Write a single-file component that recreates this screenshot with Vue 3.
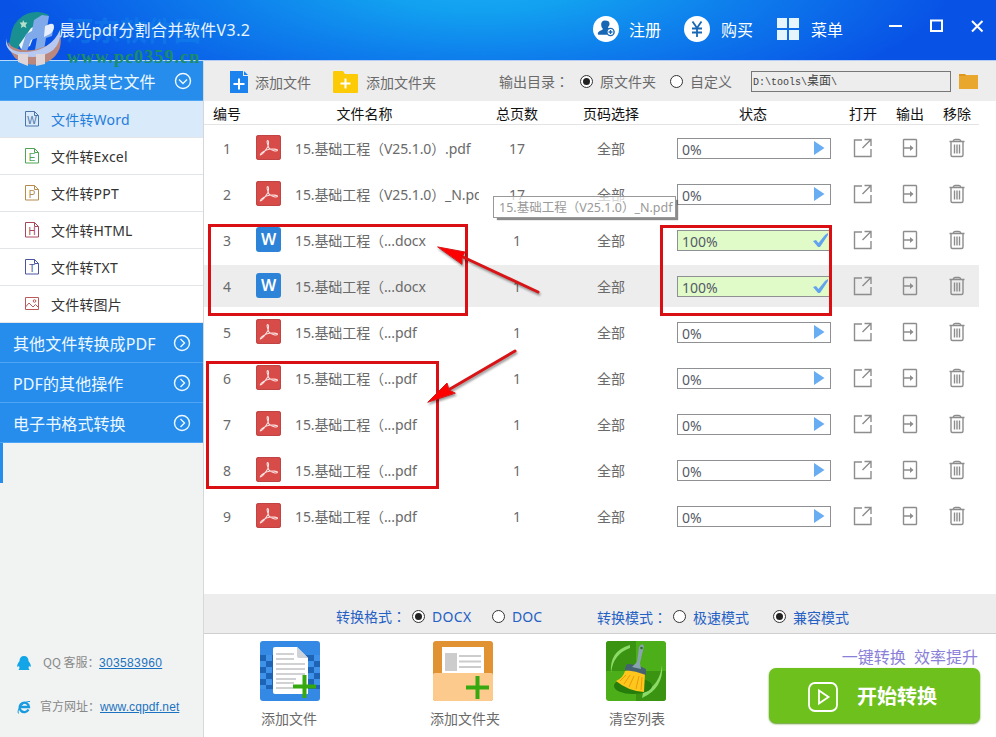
<template>
  <div class="window">
    <header class="titlebar">
      <svg class="logo" width="58" height="60" viewBox="0 0 58 60">
        <path d="M7 22A26 26 0 0 1 44 7L31 17 20 30 12 42 4 36z" fill="#1a8f91" />
        <path d="M18 12l1.500 2.500 3 0-2 2.500 1 3-3-1.500-2.500 1.500.5-3-2-2.500h3z" fill="#b5e0c9" />
        <path d="M14 37l12-17 7-3-8 21-9 3z" fill="#eef7f5" />
        <path d="M29 12l8-5 7 1-2 12 6 2-1 6-6 2-3 18h-9l3-18-6 2-5 14h-6l6-20 6-3z" fill="#7fa9e8" />
        <path d="M40 18l5-2q4-1 4 3t-4 7l-6 3z" fill="#e7efff" />
        <path d="M3 34Q9 44 28 42 48 38 55 26 59 45 42 54 24 61 10 50 4 43 3 34z" fill="#b9877e" />
        <path d="M2 27Q-1 45 22 44 46 42 55 22 57 46 29 49 4 49 1 36z" fill="#b7c9f1" />
        <path d="M13 46h10v12l-10-4zM31 46h9v10l-9 2z" fill="#dfd5d9" />
      </svg>
      <h1 class="app-name">晨光pdf分割合并软件V3.2</h1>
      <div class="mark-name">河东软件园</div>
      <div class="mark-url">www.pc0359.cn</div>
      <nav class="top-menu">
        <a class="top-item register">
          <svg width="28" height="28" viewBox="0 0 28 28">
            <circle cx="14" cy="14" r="13" fill="#fff" />
            <path d="M13 5.500c-2.700 0-4 1.700-3.800 4.300 0 2 .8 3 1.600 4 0 2-5 1.700-5 5.200q0 .8 1 .8h8l4-6c-3-.2-2.800-1.200-2.500-2 .8-1 1.200-1.500 1.200-3 0-2.300-1.500-3.300-4.500-3.300z" fill="#1767b5" />
            <circle cx="18.500" cy="17" r="3.600" fill="#fff" stroke="#1767b5" stroke-width="1.400" />
            <path d="M16.500 17h4M18.500 15v4" stroke="#1767b5" stroke-width="1.300" />
          </svg>
          <span>注册</span>
        </a>
        <a class="top-item buy">
          <svg width="28" height="28" viewBox="0 0 28 28">
            <circle cx="14" cy="14" r="13" fill="#fff" />
            <path d="M9.500 6.500l4.500 6.500 4.500-6.500M14 13v9M9 13.500h10M9 17.500h10" fill="none" stroke="#1767b5" stroke-width="1.800" />
          </svg>
          <span>购买</span>
        </a>
        <a class="top-item menu">
          <svg width="24" height="24" viewBox="0 0 24 24" fill="#e6f4fe">
            <path d="M1 1h10v10H1zM13 1h10v10H13zM1 13h10v10H1zM13 13h10v10H13z" />
          </svg>
          <span>菜单</span>
        </a>
      </nav>
      <div class="window-buttons">
        <svg width="14" height="14" viewBox="0 0 14 14"><path d="M0 7h13" /></svg>
        <svg width="14" height="14" viewBox="0 0 14 14"><path d="M1 1.500h11v10.500H1z" /></svg>
        <svg width="14" height="14" viewBox="0 0 14 14"><path d="M1 2l10.500 10.500M11.500 2L1 12.500" /></svg>
      </div>
    </header>

    <div class="body">
      <aside class="sidebar">
        <div class="group open">
          <span>PDF转换成其它文件</span>
          <svg width="18" height="18" viewBox="0 0 18 18">
            <circle cx="9" cy="9" r="7.500" />
            <path d="M5 7.500l4 4 4-4" />
          </svg>
        </div>
        <ul class="formats">
          <li v-for="item in formats" :key="item.name" :class="{ active: item.active }">
            <svg class="format-icon" width="16" height="18" viewBox="0 0 16 18" :stroke="item.color">
              <template v-if="item.letter">
                <path d="M.500 1.500h9l4 4v10.500h-13zM9.500 1.500v4h4" />
                <text x="7" y="13.500" :fill="item.color">{{ item.letter }}</text>
              </template>
              <template v-else>
                <path d="M.500 2.500h13v12h-13zM.500 12l3.500-4 4 4 2.500-2.500 3 3" />
                <circle cx="9.500" cy="6" r="1.300" />
              </template>
            </svg>
            <span>{{ item.name }}</span>
          </li>
        </ul>
        <div v-for="name in groups" :key="name" class="group">
          <span>{{ name }}</span>
          <svg width="18" height="18" viewBox="0 0 18 18">
            <circle cx="9" cy="9" r="7.500" />
            <path d="M7.500 5l4 4-4 4" />
          </svg>
        </div>
        <div class="stripe"></div>
        <div class="contacts">
          <div class="contact">
            <svg width="14" height="16" viewBox="0 0 14 16">
              <path d="M7 1C4 1 2.500 3 2.500 6 1 8-.5 10.500.5 12l1.500-1 .5 2L1.500 15h11l-1-2 .5-2 1.500 1c1-1.500-.5-4-2-6 0-3-1.500-5-4.500-5z" fill="#12a5e8" />
            </svg>
            <span class="qq-label">QQ 客服：</span>
            <a>303583960</a>
          </div>
          <div class="contact site">
            <svg width="14" height="16" viewBox="0 0 14 16">
              <path d="M11.500 10.500A4.700 4.700 0 1 1 12 8H3" fill="none" stroke="#1a9be0" stroke-width="2.300" />
              <path d="M1.500 14.500C-1 11 7 1.500 13 2.500" fill="none" stroke="#1a9be0" />
            </svg>
            <span class="site-label">官方网址：</span>
            <a>www.cqpdf.net</a>
          </div>
        </div>
      </aside>

      <main class="content">
        <div class="toolbar">
          <svg class="tool-file" width="18" height="22" viewBox="0 0 18 22">
            <path d="M0 0h13v5h5v17H0z" fill="#1c82ee" />
            <path d="M14 0l4 4h-4z" fill="#1c82ee" />
            <path d="M3.500 13h11M9 7.500v11" stroke="#fff" stroke-width="2" />
          </svg>
          <span class="tool-label">添加文件</span>
          <svg class="tool-folder" width="25" height="22" viewBox="0 0 25 22">
            <path d="M0 1q0-1 1-1h9l2 3h12q1 0 1 1v17q0 1-1 1H1q-1 0-1-1z" fill="#fccb05" />
            <path d="M7.500 12.500h10M12.500 7.500v10" stroke="#fff" stroke-width="2" />
          </svg>
          <span class="tool-label folder-label">添加文件夹</span>
          <span class="dir-label">输出目录<span class="colon">：</span></span>
          <i class="radio checked"></i>
          <span class="dir-option">原文件夹</span>
          <i class="radio"></i>
          <span class="dir-option">自定义</span>
          <div class="path">D:\tools\<span>桌面</span>\</div>
          <svg class="browse" width="21" height="17" viewBox="0 0 21 17">
            <path d="M1 1h6l1 1H20v14H1z" fill="#e0971c" />
            <path d="M1 3h6l2-1h11v14H1z" fill="#e9a72e" />
          </svg>
        </div>

        <section class="table">
          <div class="line head">
            <span class="center">编号</span>
            <span class="center file-head">文件名称</span>
            <span class="center">总页数</span>
            <span class="center">页码选择</span>
            <span class="center">状态</span>
            <span class="center">打开</span>
            <span class="center">输出</span>
            <span class="center">移除</span>
          </div>
          <div v-for="(file, index) in files" :key="index" class="line row" :class="{ selected: index === 3 }">
            <span class="center">{{ index + 1 }}</span>
            <div class="type">
              <div v-if="file.done" class="badge word">W</div>
              <div v-else class="badge pdf">
                <svg width="25" height="25" viewBox="0 0 25 25">
                  <path d="M11.500 5.500c-1.300 1 .6 5.500 1.500 7.500 2.500 3 8 3.500 8.500 2.300.2-1.400-5.500-1.500-8.500-1C10 15 4.500 17.500 4.300 19.800c1.800.7 5-4 7.700-8.300.7-3 .9-6-.5-6z" />
                </svg>
              </div>
            </div>
            <span class="file-name">{{ file.name }}</span>
            <span class="center">{{ file.pages }}</span>
            <span class="center">全部</span>
            <div class="status" :class="{ done: file.done }">
              <span>{{ file.done ? '100%' : '0%' }}</span>
              <svg v-if="file.done" width="17" height="16" viewBox="0 0 17 16">
                <path d="M1 9l3-1 2.500 3L13 3l3-2v2L8 15H6z" fill="#63a3ee" />
              </svg>
              <svg v-else width="11" height="14" viewBox="0 0 11 14">
                <path d="M0 0l10.500 7L0 14z" fill="#68acf2" />
              </svg>
            </div>
            <svg class="action" width="20" height="20" viewBox="0 0 20 20">
              <path d="M9 2H1.500v16.500h16.500V11M11.500 1.500h6.500V8M18 1.500L9.500 10" />
            </svg>
            <svg class="action" width="16" height="20" viewBox="0 0 16 20">
              <path d="M2 1.500h12l.5.5v16l-.5.500H2l-.5-.5V2zM1.500 10h9" />
              <path d="M8 7l3.500 3L8 13z" class="solid" />
            </svg>
            <svg class="action" width="16" height="20" viewBox="0 0 16 20">
              <path d="M.500 3.500h15M4 3.500q.500-2 2-2h4q1.500 0 2 2M2 4v13q0 1.500 1.500 1.500h9q1.500 0 1.500-1.500V4M5.500 6.500v9M8 6.500v9M10.500 6.500v9" />
            </svg>
          </div>
        </section>

        <div class="options">
          <span class="format-title">转换格式<span class="colon">：</span></span>
          <i class="radio checked"></i>
          <span class="option docx">DOCX</span>
          <i class="radio"></i>
          <span class="option doc">DOC</span>
          <span class="mode-title">转换模式<span class="colon">：</span></span>
          <i class="radio"></i>
          <span class="option fast">极速模式</span>
          <i class="radio checked"></i>
          <span class="option safe">兼容模式</span>
        </div>

        <footer class="footer">
          <div class="big">
            <svg width="60" height="60" viewBox="0 0 60 60">
              <rect width="60" height="60" rx="3" fill="#3389e3" />
              <path d="M0 14h60v34H0z" fill="#1d64b6" />
              <path d="M0 20h6v6H0zM6 14h6v6H6zM6 26h6v6H6zM0 32h6v6H0zM6 38h6v6H6zM0 44h6v4H0zM48 20h6v6h-6zM54 14h6v6h-6zM54 26h6v6h-6zM48 32h6v6h-6zM54 38h6v6h-6z" fill="#3f92ea" />
              <path d="M15 6h22l11 11v36H15q-2 0-2-2V8q0-2 2-2z" fill="#fff" />
              <path d="M37 6l11 11H39q-2 0-2-2z" fill="#cfd2d6" />
              <path d="M16 13h18M16 18h18M16 23h29M16 28h29M16 33h29M16 38h20M16 42h18M16 47h17" stroke="#d0d1d3" stroke-width="2" />
              <path d="M33 45.500h23M44.500 34v23" stroke="#35a90f" stroke-width="4" />
            </svg>
            <span>添加文件</span>
          </div>
          <div class="big">
            <svg width="60" height="60" viewBox="0 0 60 60">
              <rect width="60" height="60" rx="3" fill="#e19334" />
              <path d="M9 6h42v26H9z" fill="#fff" />
              <path d="M12 12h12v18H12z" fill="#ccc" />
              <path d="M26 15h22M26 20.500h22M26 26h22" stroke="#ccc" stroke-width="2" />
              <path d="M0 34q0-2 2-2h56q2 0 2 2v23q0 3-3 3H3q-3 0-3-3z" fill="#fdca8e" />
              <path d="M33 46.500h23M44.500 35v23" stroke="#35a90f" stroke-width="4" />
            </svg>
            <span class="wide">添加文件夹</span>
          </div>
          <div class="big">
            <svg width="60" height="60" viewBox="0 0 60 60">
              <rect width="60" height="60" rx="3" fill="#4cae18" />
              <path d="M3 0h27v30H0V3q0-3 3-3zM30 30h30v27q0 3-3 3H30z" fill="#3a9412" />
              <path d="M5 32Q3 10 24 4l0 3Q7 13 5 32zM56 24q2 23-20 33l1-5q17-8 19-28z" fill="#8cdb68" />
              <ellipse cx="27" cy="45" rx="19" ry="8" fill="#267d0b" />
              <path d="M19 30q11-4 20 2l-1 19Q22 50 10 40q7-3 9-10z" fill="#ffc61d" />
              <path d="M20 34l-6 6M24 34l-6 9M28 35l-5 11M33 35l-3 13M36 36l-1 13" stroke="#e89c09" />
              <path d="M19 27l2-4q9 0 19 5v6q-10-4-21-5z" fill="#456270" />
              <path d="M26 26l5-5 2-15q3-5 5-1l-4 17 1 6z" fill="#8aa3b0" />
              <circle cx="35.500" cy="7" r="1.300" fill="#336d25" />
            </svg>
            <span class="clear">清空列表</span>
          </div>
          <div class="start">
            <p class="slogan">一键转换&nbsp; 效率提升</p>
            <button class="start-button">
              <svg width="30" height="30" viewBox="0 0 30 30">
                <rect x="1" y="1" width="28" height="28" rx="6" />
                <path d="M11 8.500l9.500 6.500-9.500 6.500z" />
              </svg>
              <span>开始转换</span>
            </button>
          </div>
        </footer>
      </main>
    </div>

    <div class="tooltip">15.基础工程（V25.1.0）_N.pdf</div>
    <svg class="notes" width="996" height="737" viewBox="0 0 996 737">
      <g fill="none" stroke="#d90f14" stroke-width="3">
        <path d="M209.500 225.500h257v89h-257zM661.500 226.500h169v88h-169zM207.500 362.500h230v125h-230z" />
      </g>
      <g class="arrows">
        <path d="M538 292L463 257" />
        <path d="M515 351L450 389" />
        <path class="tip" d="M438 247L465 252 462 257 462 264z" />
        <path class="tip" d="M428 402L447 383 449 390 455 393z" />
      </g>
    </svg>
  </div>
</template>

<script setup>
const formats = [
  { name: '文件转Word', letter: 'W', color: '#4b74a8', active: true },
  { name: '文件转Excel', letter: 'E', color: '#4fa553' },
  { name: '文件转PPT', letter: 'P', color: '#b58a4c' },
  { name: '文件转HTML', letter: 'H', color: '#a8475a' },
  { name: '文件转TXT', letter: 'T', color: '#4a55a0' },
  { name: '文件转图片', color: '#bb5a5a' }
]
const groups = ['其他文件转换成PDF', 'PDF的其他操作', '电子书格式转换']
const files = [
  { name: '15.基础工程（V25.1.0）.pdf', pages: 17 },
  { name: '15.基础工程（V25.1.0）_N.pdf', pages: 17 },
  { name: '15.基础工程（...docx', pages: 1, done: true },
  { name: '15.基础工程（...docx', pages: 1, done: true },
  { name: '15.基础工程（...pdf', pages: 1 },
  { name: '15.基础工程（...pdf', pages: 1 },
  { name: '15.基础工程（...pdf', pages: 1 },
  { name: '15.基础工程（...pdf', pages: 1 },
  { name: '15.基础工程（...pdf', pages: 1 }
]
</script>

<style>
body {
  margin: 0;
}
</style>

<style scoped>
.window {
  position: relative;
  display: flex;
  flex-direction: column;
  width: 996px;
  height: 737px;
  overflow: hidden;
  background: #fff;
  color: #6a6a6a;
  font: 14px/20px 'Noto Sans', 'Noto Sans CJK SC', sans-serif;
  white-space: nowrap;
}
svg {
  display: block;
  flex: none;
}
.titlebar {
  position: relative;
  display: flex;
  flex: none;
  height: 60px;
  box-sizing: border-box;
  color: #fff;
  background: radial-gradient(ellipse 480px 150px at 480px -25px, #18aef5, #12a0f0 25%, #0e7fec 55%, rgba(8, 82, 230, 0)), #0852e6;
}
.logo {
  margin: 8px 0 0 5px;
}
.app-name {
  z-index: 1;
  width: 200px;
  margin: 17px 0 0 -4px;
  font-size: 16px;
  font-weight: 400;
  line-height: 26px;
  letter-spacing: 0.4px;
  color: #e8f4ff;
}
.mark-name {
  position: absolute;
  left: 66px;
  top: 14px;
  font: bold 27px/32px 'Noto Sans CJK SC', sans-serif;
  color: rgba(20, 140, 235, 0.4);
}
.mark-url {
  position: absolute;
  z-index: 1;
  left: 67px;
  top: 47px;
  font: bold 18px/20px 'Liberation Serif', serif;
  letter-spacing: 1.1px;
  color: #1b8c69;
}
.top-menu {
  display: flex;
  margin-left: 333px;
}
.top-item {
  display: flex;
  gap: 9px;
  font-size: 16px;
  line-height: 26px;
}
.top-item svg {
  margin-top: 15px;
}
.top-item span {
  margin-top: 17px;
}
.buy {
  gap: 10px;
  margin-left: 22px;
}
.menu {
  gap: 11px;
  margin-left: 23px;
}
.menu svg {
  margin-top: 17px;
}
.window-buttons {
  display: flex;
  gap: 27px;
  margin: 19px 0 0 46px;
  fill: none;
  stroke: #fff;
  stroke-width: 2;
}
.body {
  display: flex;
  flex: 1;
  min-height: 0;
}
.sidebar {
  display: flex;
  flex-direction: column;
  width: 203px;
  background: #f1f3f3;
  border-right: 1px solid #d5d7d8;
}
.group {
  display: flex;
  align-items: center;
  justify-content: space-between;
  height: 40px;
  box-sizing: border-box;
  padding: 2px 12px 0 13px;
  font-size: 16px;
  letter-spacing: 0.1px;
  color: #eef8ff;
  background: #268ded;
  border-bottom: 1px solid #4ea5f5;
}
.group.open {
  height: 41px;
  padding-right: 11px;
  border-top: 1px solid #b8d9f8;
}
.group svg {
  margin-top: -1px;
  fill: none;
  stroke: #eef8ff;
  stroke-width: 1.4;
}
.formats {
  margin: 0;
  padding: 0;
  list-style: none;
  background: #fff;
}
.formats li {
  display: flex;
  align-items: center;
  gap: 10px;
  height: 37px;
  box-sizing: border-box;
  padding: 1px 0 0 25px;
  border-bottom: 1px solid #e2e6e8;
  letter-spacing: 0.2px;
  color: #333;
}
.formats li.active {
  color: #1f7ddb;
  background: #d9eafa;
}
.format-icon {
  margin-top: -1px;
  fill: none;
}
.format-icon text {
  font: 10px 'Liberation Sans', sans-serif;
  letter-spacing: 0;
  stroke: none;
  text-anchor: middle;
}
.stripe {
  width: 3px;
  height: 40px;
  background: #268ded;
}
.contacts {
  margin-top: auto;
  padding: 0 0 21px 17px;
  font: 12px/18px 'Noto Sans CJK SC', sans-serif;
  color: #888;
}
.contact {
  display: flex;
  align-items: center;
}
.contact span {
  margin-top: -2px;
}
.site {
  margin-top: 26px;
}
.contact .qq-label {
  width: 56px;
  margin-left: 12px;
}
.contact .site-label {
  width: 60px;
  margin-left: 9px;
}
.contact a {
  font-family: 'Liberation Sans', sans-serif;
  letter-spacing: 0.35px;
  color: #1b72c0;
  text-decoration: underline;
}
.site a {
  letter-spacing: 0.1px;
}
.colon {
  font-family: 'Noto Sans CJK TC', sans-serif;
}
.content {
  display: flex;
  flex-direction: column;
  flex: 1;
  min-width: 0;
}
.toolbar {
  display: flex;
  align-items: center;
  height: 41px;
  box-sizing: border-box;
  padding-left: 26px;
  background: #ededed;
  border-top: 1px solid #b5cdf5;
}
.tool-file,
.tool-folder {
  margin-top: 2px;
}
.tool-label {
  width: 78px;
  margin: 3px 0 0 7px;
}
.tool-label.folder-label {
  width: 133px;
  margin-left: 8px;
}
.radio {
  position: relative;
  flex: none;
  width: 11px;
  height: 11px;
  background: #fff;
  border: 1px solid #333;
  border-radius: 50%;
}
.radio.checked::after {
  content: '';
  position: absolute;
  left: 2px;
  top: 2px;
  width: 7px;
  height: 7px;
  border-radius: 50%;
  background: #222;
}
.dir-label {
  width: 81px;
}
.dir-option {
  width: 70px;
  margin: 2px 0 0 7px;
}
.radio + .dir-option + .path {
  margin-left: -9px;
}
.path {
  flex: none;
  width: 197px;
  height: 19px;
  padding-left: 1px;
  font: 10px/18px 'Liberation Mono', monospace;
  color: #444;
  border: 1px solid #777;
}
.path span {
  font: 12px/16px 'Noto Sans CJK SC', sans-serif;
}
.browse {
  margin-left: 7px;
}
.table {
  height: 493px;
}
.line {
  display: grid;
  grid-template-columns: 46px 45px 184px 76px 112px 172px 48px 46px 48px;
  align-items: center;
}
.head {
  width: 775px;
  height: 24px;
  box-sizing: border-box;
  padding-top: 2px;
  overflow: hidden;
  color: #111;
  border-bottom: 1px solid #e4e4e4;
}
.file-head {
  grid-column: 2 / 4;
}
.center {
  text-align: center;
}
.row {
  width: 775px;
  height: 42px;
  margin: 2px 0 4px;
}
.row.selected {
  background: #ededed;
}
.row > span {
  padding-top: 2px;
}
.type {
  padding-left: 6px;
}
.badge {
  width: 25px;
  height: 25px;
  margin-top: -1px;
  border-radius: 3px;
}
.pdf {
  background: #d74b49;
  box-shadow: inset 0 0 0 1px #c04443;
}
.pdf path {
  fill: none;
  stroke: #fbe3e2;
  stroke-width: 1.1;
}
.word {
  background: #2d83d8;
  color: #fff;
  font: 600 16px/24px 'Noto Sans', sans-serif;
  text-align: center;
}
.file-name {
  overflow: hidden;
  letter-spacing: -0.1px;
}
.status {
  display: flex;
  align-items: center;
  justify-content: space-between;
  width: 154px;
  height: 21px;
  box-sizing: border-box;
  margin-left: 10px;
  padding: 0 5px 0 4px;
  border: 1px solid #8e9094;
  background: #fff;
  color: #555b68;
}
.status span {
  padding-top: 3px;
}
.status.done {
  padding-right: 1px;
  background: #e0fac8;
}
.action {
  justify-self: center;
  fill: none;
  stroke: #8d8d8d;
  stroke-width: 1.4;
}
.solid {
  fill: #8d8d8d;
  stroke: none;
}
.options {
  display: flex;
  align-items: center;
  height: 40px;
  box-sizing: border-box;
  padding: 6px 0 0 132px;
  color: #2560c4;
  background: #ededed;
  border-bottom: 1px solid #cfcfcf;
}
.format-title,
.mode-title {
  width: 76px;
}
.mode-title,
.fast,
.safe {
  padding-top: 2px;
}
.option {
  margin-left: 7px;
}
.docx {
  width: 60px;
  letter-spacing: 0.3px;
}
.doc {
  width: 85px;
}
.fast {
  width: 80px;
}
.footer {
  display: flex;
  flex: 1;
  padding-left: 56px;
}
.big {
  display: flex;
  flex-direction: column;
  width: 60px;
  margin: 7px 113px 0 0;
}
.big span {
  margin: 8px 0 0 1px;
}
.big .wide {
  margin-left: -3px;
}
.big .clear {
  margin-left: 3px;
}
.start {
  margin-left: -10px;
}
.slogan {
  margin: 13px 0 1px;
  padding-right: 2px;
  font-size: 16px;
  text-align: right;
  color: #8a80d9;
}
.start-button {
  display: flex;
  align-items: center;
  gap: 19px;
  width: 211px;
  height: 55px;
  padding: 2px 0 0 39px;
  border: 0;
  border-radius: 7px;
  background: #6ec01c;
  box-shadow: 0 1px 2px #58961d;
  color: #fff;
  font: bold 20px/28px 'Noto Sans', 'Noto Sans CJK SC', sans-serif;
}
.start-button svg {
  fill: none;
  stroke: #fff;
  stroke-width: 1.8;
}
.tooltip {
  position: absolute;
  left: 493px;
  top: 196px;
  width: 176px;
  height: 20px;
  padding-left: 5px;
  font-size: 12.5px;
  line-height: 21px;
  color: #999;
  background: rgba(255, 255, 255, 0.72);
  border: 1px solid #999;
  box-shadow: 3px 3px 1px -1px rgba(90, 90, 90, 0.7);
}
.notes {
  position: absolute;
  left: 0;
  top: 0;
}
.arrows {
  fill: none;
  stroke: #d81417;
  stroke-width: 3;
  stroke-linecap: round;
  filter: drop-shadow(1px 2px 1px rgba(0, 0, 0, 0.4));
}
.tip {
  fill: #f00;
  stroke-width: 1;
}
</style>
